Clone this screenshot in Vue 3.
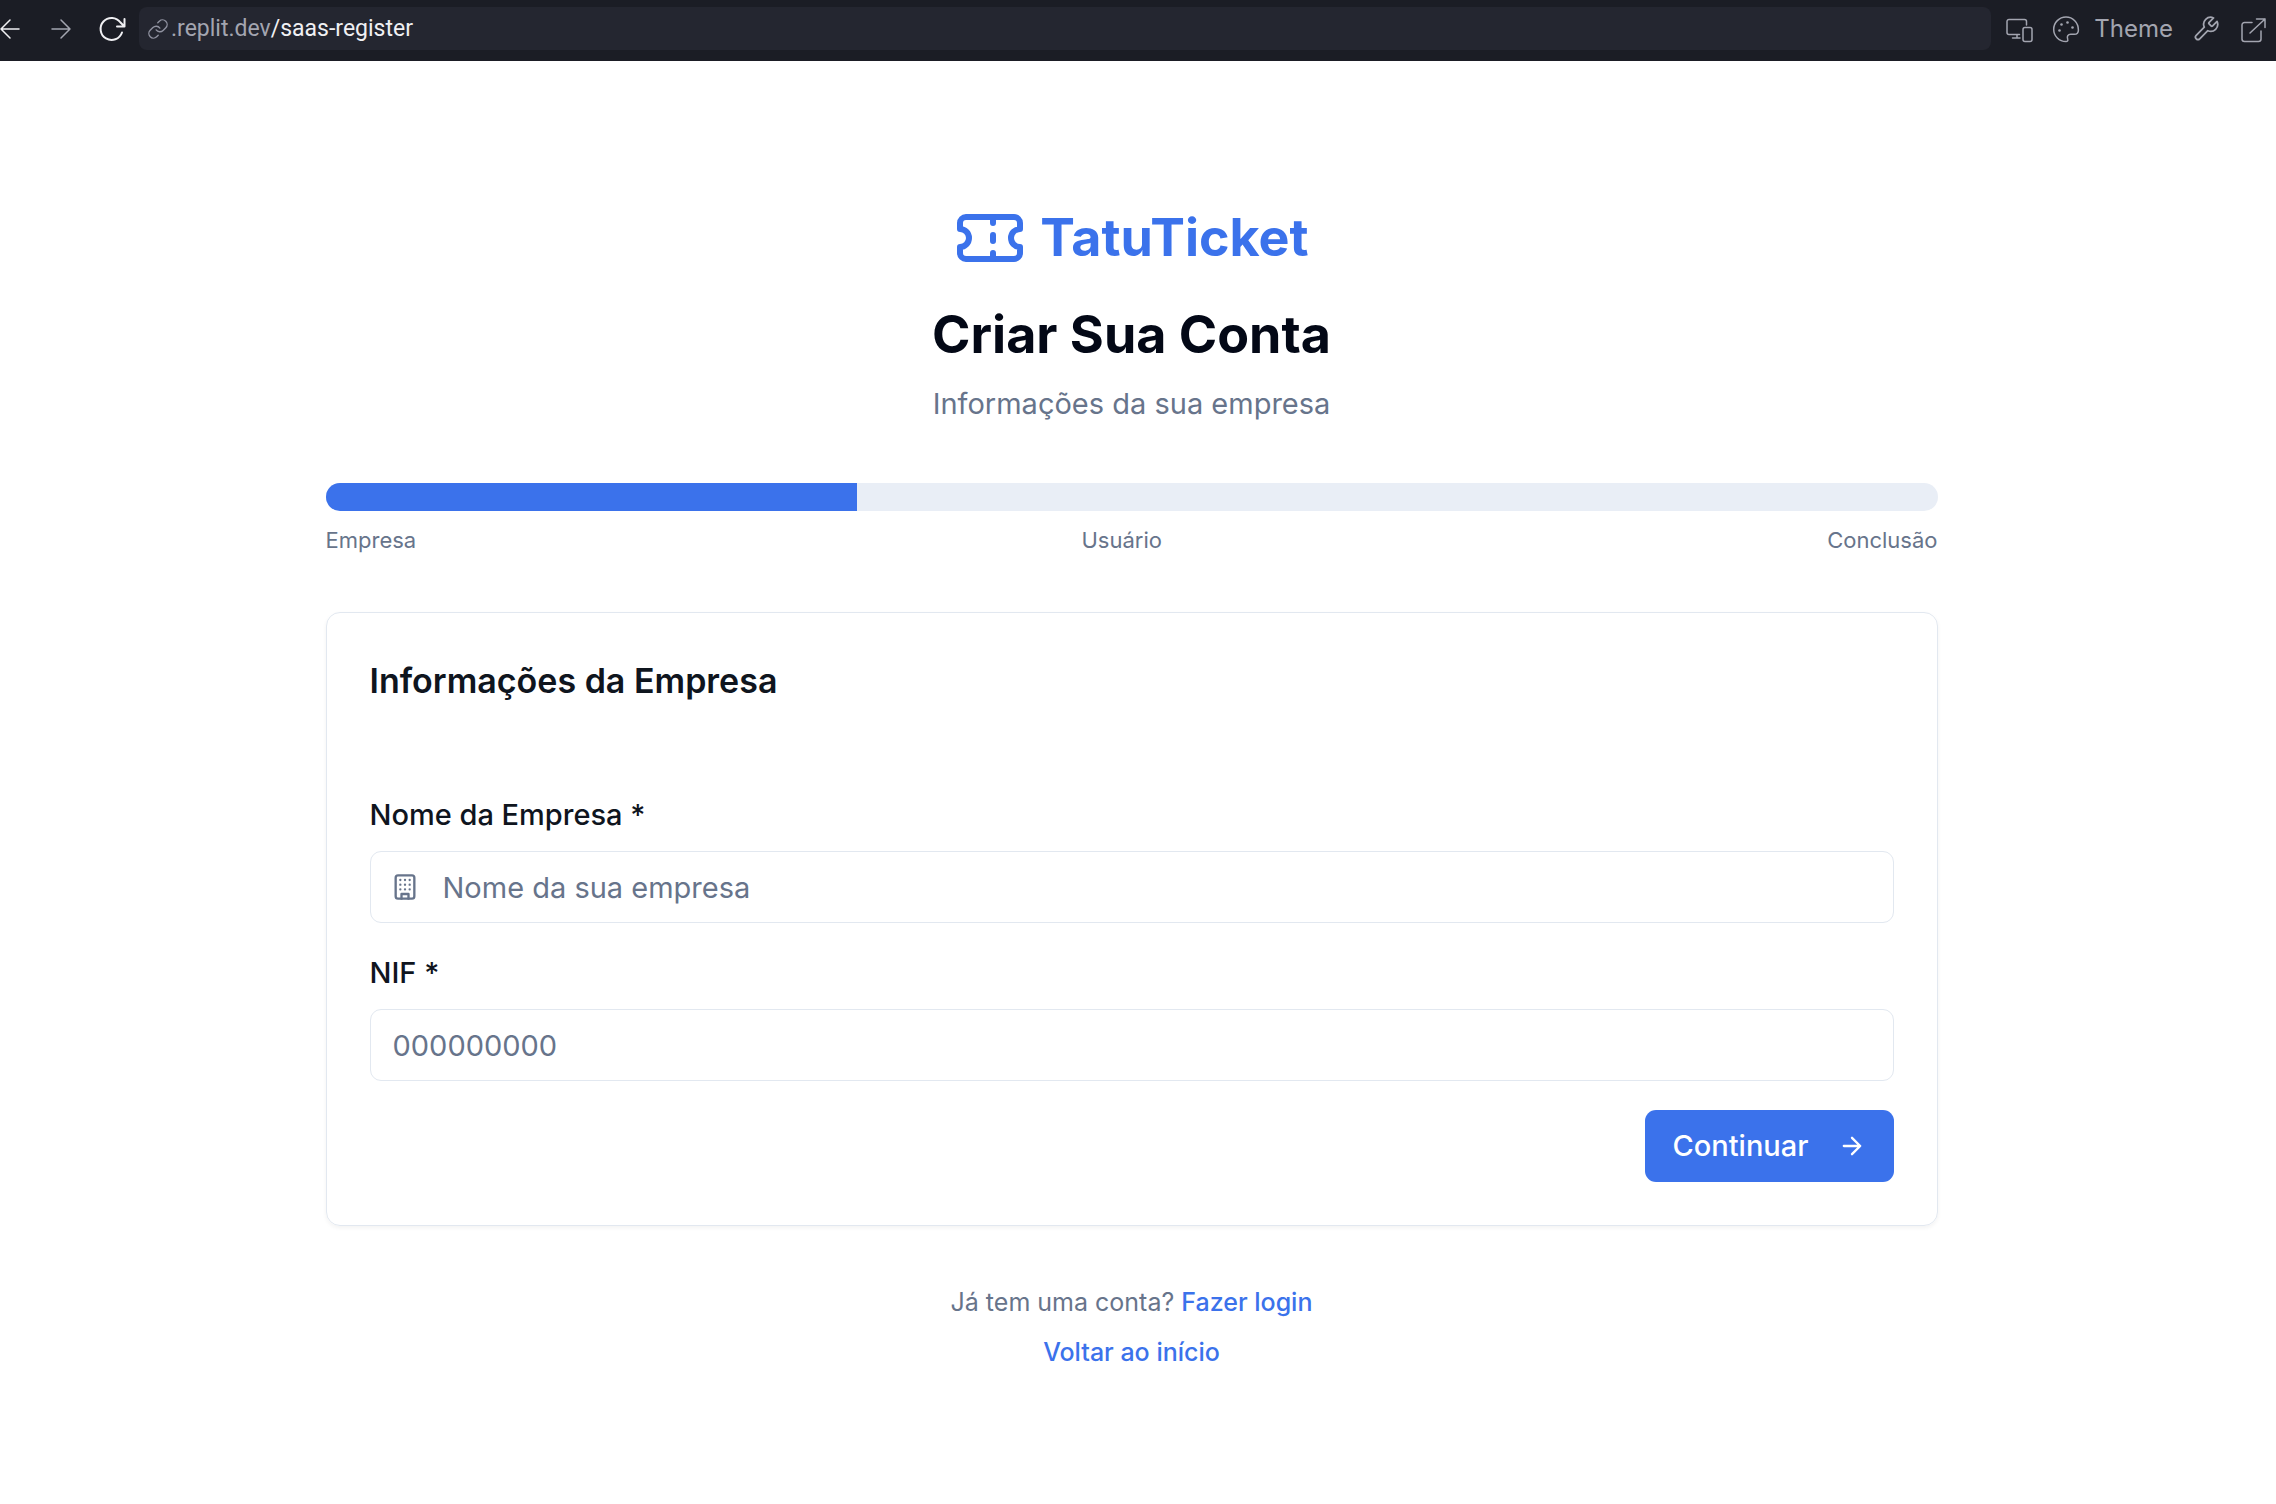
<script setup>
import { ref } from 'vue'

const steps = ['Empresa', 'Usuário', 'Conclusão']
const progress = 33
const company = ref('')
const nif = ref('')
</script>

<template>
  <div class="page">
    <header class="toolbar">
      <nav class="history" aria-label="Navegação">
        <button type="button" class="tool bright" aria-label="Back">
          <svg viewBox="0 0 28 28"><path d="M23 14H5M14 5l-9 9 9 9" /></svg>
        </button>
        <button type="button" class="tool" aria-label="Forward">
          <svg viewBox="0 0 28 28"><path d="M5 14h18M14 5l9 9-9 9" /></svg>
        </button>
        <button type="button" class="tool bright reload" aria-label="Reload">
          <svg viewBox="0 0 28 28"><path d="M24 17.500A11 11 0 1 1 22.500 7.500L26 11M26.500 4v7.500h-7.500" /></svg>
        </button>
      </nav>
      <button type="button" class="address">
        <svg viewBox="0 0 24 24" aria-hidden="true"><path d="M10 13a5 5 0 0 0 7.540.540l3-3a5 5 0 0 0-7.070-7.070l-1.720 1.710" /><path d="M14 11a5 5 0 0 0-7.540-.540l-3 3a5 5 0 0 0 7.070 7.070l1.710-1.710" /></svg>
        <span class="url"><span class="host">.replit.dev</span>/saas-register</span>
      </button>
      <div class="actions">
        <button type="button" class="tool" aria-label="Devices">
          <svg viewBox="0 0 28 28"><path d="M14.500 19.500H4a2 2 0 0 1-2-2V6.500a2 2 0 0 1 2-2h15.500a2 2 0 0 1 2 2V10M12 19.500v3.500M7.500 23H15" /><rect x="18" y="12.500" width="9" height="14" rx="2" /></svg>
        </button>
        <button type="button" class="tool theme">
          <svg viewBox="0 0 28 28" aria-hidden="true"><path d="M14 2a12.300 12.300 0 1 0 0 24.600c1.600 0 2.200-1.100 1.700-2.400-1-2.900.200-4.900 3-4.900h3.700c2.400 0 4-1.700 4-4.400C26.400 7.600 20.800 2 14 2Z" /><g class="dots"><circle cx="7.500" cy="15.500" r="1.300" /><circle cx="9.500" cy="9.500" r="1.300" /><circle cx="15.500" cy="7.500" r="1.300" /><circle cx="20.500" cy="12.500" r="1.300" /></g></svg>
          Theme
        </button>
        <button type="button" class="tool" aria-label="Tools">
          <svg viewBox="0 0 24 24"><path d="M14.700 6.300a1 1 0 0 0 0 1.400l1.600 1.600a1 1 0 0 0 1.400 0l3.770-3.770a6 6 0 0 1-7.940 7.940l-6.910 6.910a2.120 2.120 0 0 1-3-3l6.910-6.910a6 6 0 0 1 7.940-7.940l-3.760 3.760z" /></svg>
        </button>
        <button type="button" class="tool" aria-label="Open in new tab">
          <svg viewBox="0 0 28 28"><path d="M22 16v8a2.500 2.500 0 0 1-2.500 2.500H5.500A2.500 2.500 0 0 1 3 24V10a2.500 2.500 0 0 1 2.500-2.500H13M17.500 4H26v8.500M26 4 11 18" /></svg>
        </button>
      </div>
    </header>

    <main class="content">
      <div class="column">
        <div class="brand">
          <svg viewBox="0 0 24 24" aria-hidden="true"><path d="M2 9a3 3 0 0 1 0 6v2a2 2 0 0 0 2 2h16a2 2 0 0 0 2-2v-2a3 3 0 0 1 0-6V7a2 2 0 0 0-2-2H4a2 2 0 0 0-2 2Z" /><path d="M13 5v2M13 17v2M13 11v2" /></svg>
          <span>TatuTicket</span>
        </div>
        <h1>Criar Sua Conta</h1>
        <p class="subtitle">Informações da sua empresa</p>

        <div class="track" role="progressbar" :aria-valuenow="progress" aria-valuemin="0" aria-valuemax="100" aria-label="Progresso">
          <div class="fill" :style="{ width: progress + '%' }"></div>
        </div>
        <div class="steps">
          <span v-for="step in steps" :key="step">{{ step }}</span>
        </div>

        <form class="card" @submit.prevent>
          <h2>Informações da Empresa</h2>
          <div class="field">
            <label for="company">Nome da Empresa *</label>
            <div class="control">
              <svg viewBox="0 0 24 24" aria-hidden="true"><rect x="4" y="2" width="16" height="20" rx="2" /><path d="M9 22v-4h6v4M8 6h.010M16 6h.010M12 6h.010M12 10h.010M12 14h.010M16 10h.010M16 14h.010M8 10h.010M8 14h.010" /></svg>
              <input id="company" v-model="company" type="text" placeholder="Nome da sua empresa" />
            </div>
          </div>
          <div class="field">
            <label for="nif">NIF *</label>
            <div class="control">
              <input id="nif" v-model="nif" type="text" placeholder="000000000" />
            </div>
          </div>
          <button type="submit" class="submit">
            Continuar
            <svg viewBox="0 0 24 24" aria-hidden="true"><path d="M5 12h14M12 5l7 7-7 7" /></svg>
          </button>
        </form>

        <footer class="links">
          <p>Já tem uma conta? <a href="#login">Fazer login</a></p>
          <p><a href="#inicio">Voltar ao início</a></p>
        </footer>
      </div>
    </main>
  </div>
</template>

<style>
body {
  margin: 0;
  background: #fff;
}
</style>

<style scoped>
.page {
  min-height: 100vh;
  background: #fff;
  color: #0f151e;
  font-family: Inter, "Liberation Sans", sans-serif;
  font-size: 29px;
  overflow-x: hidden;
}
button,
input {
  font: inherit;
}
button {
  border: 0;
  padding: 0;
  background: none;
  cursor: pointer;
}
svg {
  flex: none;
  fill: none;
  stroke: currentColor;
  stroke-linecap: round;
  stroke-linejoin: round;
}

.toolbar {
  display: flex;
  align-items: center;
  box-sizing: border-box;
  padding: 7px 9px 11px 0;
  background: #1b1d25;
  color: #a3a5b0;
}
.history {
  display: flex;
  gap: 23px;
  margin-left: -4px;
}
.tool {
  display: flex;
  align-items: center;
  gap: 14px;
  color: inherit;
}
.tool svg {
  width: 28px;
  height: 28px;
  stroke-width: 1.5;
}
.bright {
  color: #f0f0f3;
}
.tool.reload svg {
  stroke-width: 2;
}
.address {
  flex: 1;
  display: flex;
  align-items: center;
  gap: 2px;
  margin: 0 14px 0 13px;
  padding: 0 8px;
  border-radius: 8px;
  background: #242630;
  color: #f0f0f3;
  font-family: Roboto, "Noto Sans", sans-serif;
  font-size: 23px;
  line-height: 43px;
  text-align: left;
}
.address svg {
  width: 22px;
  height: 22px;
  color: #9092a0;
  stroke-width: 1.5;
}
.host {
  color: #a3a5b0;
}
.actions {
  display: flex;
  align-items: center;
  gap: 19px;
}
.theme {
  font-size: 24px;
}
.dots {
  fill: currentColor;
  stroke: none;
}

.content {
  padding: 141px 13px 0 0;
}
.column {
  max-width: 1612px;
  margin: 0 auto;
}
.brand {
  display: flex;
  align-items: center;
  justify-content: center;
  gap: 14px;
  color: #3b72eb;
  font-size: 52px;
  font-weight: 700;
  line-height: 72px;
}
.brand svg {
  width: 72px;
  height: 72px;
  stroke-width: 2;
}
h1 {
  margin: 28px 0 0;
  color: #030816;
  font-size: 52px;
  font-weight: 700;
  line-height: 65px;
  text-align: center;
}
.subtitle {
  margin: 15px 0 0;
  color: #67748b;
  line-height: 44px;
  text-align: center;
}
.track {
  height: 28px;
  margin-top: 57px;
  border-radius: 14px;
  background: #e9eef6;
  overflow: hidden;
}
.fill {
  height: 100%;
  background: #3b72eb;
}
.steps {
  display: flex;
  justify-content: space-between;
  margin-top: 15px;
  color: #67748b;
  font-size: 22px;
  line-height: 29px;
}

.card {
  display: flex;
  flex-direction: column;
  margin-top: 57px;
  padding: 43px;
  border: 1px solid #e2e8f0;
  border-radius: 14px;
  box-shadow: 0 2px 4px rgba(0, 0, 0, 0.05);
}
h2 {
  margin: 0 0 95px;
  font-size: 34px;
  font-weight: 600;
  line-height: 50px;
}
.field {
  display: flex;
  flex-direction: column;
  gap: 22px;
  margin-bottom: 36px;
}
label {
  font-weight: 500;
  line-height: 28px;
}
.control {
  display: flex;
  align-items: center;
  gap: 24px;
  padding: 0 22px;
  border: 1px solid #e2e8f0;
  border-radius: 11px;
}
.control svg {
  width: 28px;
  height: 28px;
  margin-left: -2px;
  color: #67748b;
  stroke-width: 2;
}
input {
  flex: 1;
  min-width: 0;
  padding: 0;
  border: 0;
  outline: 0;
  background: none;
  color: inherit;
  line-height: 40px;
  height: 70px;
}
input::placeholder {
  color: #67748b;
  opacity: 1;
}
.submit {
  display: flex;
  align-items: center;
  align-self: flex-end;
  gap: 29px;
  margin-top: -7px;
  padding: 0 28px;
  border-radius: 11px;
  background: #3b72eb;
  color: #fff;
  font-weight: 500;
  line-height: 72px;
}
.submit svg {
  width: 28px;
  height: 28px;
  stroke-width: 2;
}

.links {
  margin-top: 58px;
  color: #67748b;
  font-size: 25px;
  line-height: 36px;
  text-align: center;
}
.links p {
  margin: 0 0 14px;
}
a {
  color: #3b72eb;
  font-weight: 500;
  text-decoration: none;
}
</style>
